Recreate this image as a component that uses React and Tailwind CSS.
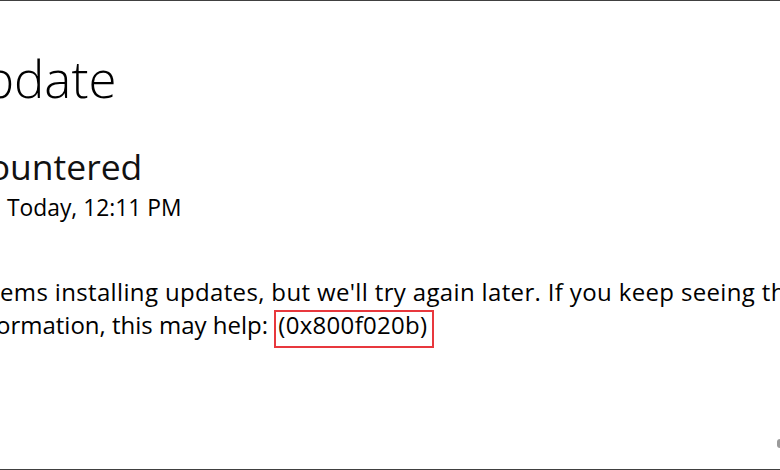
export default function App() {
  return (
    <div className="relative w-[780px] h-[470px] overflow-hidden bg-white border-y border-[#404040] text-black font-['Open_Sans',sans-serif]">
      <div className="flex flex-col pt-[52px]">
        {/* page title */}
        <div className="flex whitespace-pre pl-[14px] text-[51px] leading-[51px] font-light">
          <span className="flex w-0 shrink-0 justify-end">Windows Up</span>
          <span>date</span>
        </div>

        {/* status */}
        <div className="mt-[44px] flex whitespace-pre pl-[10px] text-[35.5px] leading-[36px] text-[#111]">
          <span className="flex w-0 shrink-0 justify-end">Error enco</span>
          <span>untered</span>
        </div>
        <div className="mt-[13px] flex whitespace-pre pl-[7px] text-[22.8px] leading-[22.5px]">
          <span className="flex w-0 shrink-0 justify-end">Last checked: </span>
          <span>Today, 12:11 PM</span>
        </div>

        {/* details */}
        <div className="mt-[55px] flex flex-col text-[24px] leading-[33px]">
          <div className="flex whitespace-pre tracking-[0.35px]">
            <span className="flex w-0 shrink-0 justify-end">There were some probl</span>
            <span>ems installing updates, but we'll try again later. If you keep seeing this and want to search the web or contact support for</span>
          </div>
          <div className="-ml-[4px] flex items-baseline whitespace-pre">
            <span className="flex w-0 shrink-0 justify-end">inf</span>
            <span>ormation, this may help: </span>
            <span className="inline-block border-2 border-[#e8383d] pl-[2px] pr-[5px] pt-[1px] pb-[9px] leading-[24px] tracking-[0.3px]">(0x800f020b)</span>
          </div>
        </div>
      </div>

      <div className="absolute right-0 bottom-[21px] w-[3px] h-[9px] rounded-l-full bg-[#9a9a9a]" />
    </div>
  )
}
